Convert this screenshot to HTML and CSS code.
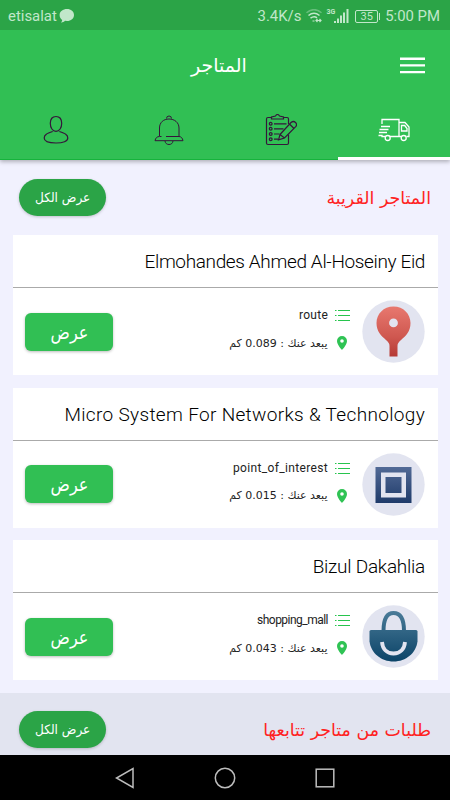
FILE: index.html
```html
<!DOCTYPE html>
<html lang="ar">
<head>
<meta charset="utf-8">
<title>المتاجر</title>
<link rel="stylesheet" href="styles.css">
</head>
<body>
<svg class="defs" width="0" height="0">
  <defs>
    <linearGradient id="red" x1="0" y1="0" x2="0" y2="1"><stop offset="0" stop-color="#e8786f"/><stop offset=".6" stop-color="#cf5850"/><stop offset="1" stop-color="#b53a35"/></linearGradient>
    <linearGradient id="blue" x1="0" y1="0" x2="0" y2="1"><stop offset="0" stop-color="#526a96"/><stop offset="1" stop-color="#1f3b6a"/></linearGradient>
    <linearGradient id="teal" gradientUnits="userSpaceOnUse" x1="0" y1="6" x2="0" y2="56"><stop offset="0" stop-color="#4a7b98"/><stop offset="1" stop-color="#0c4468"/></linearGradient>
    <symbol id="list" viewBox="0 0 15 12"><path d="M0 1.500h1.500M0 6.500h1.500M0 11.500h1.500M3 1.500h12M3 6.500h12M3 11.500h12" fill="none" stroke="#27c44d" stroke-width="1"/></symbol>
    <symbol id="pin" viewBox="0 0 10 14"><path fill="#2fc354" fill-rule="evenodd" d="M5 0a5 5 0 0 1 5 5c0 3.700-5 9-5 9S0 8.700 0 5a5 5 0 0 1 5-5zm0 3.200a1.800 1.800 0 1 0 0 3.600 1.800 1.800 0 0 0 0-3.600z"/></symbol>
  </defs>
</svg>
<div class="screen">
  <div class="status">
    <span class="carrier">etisalat</span>
    <svg class="bubble" width="16" height="14" viewBox="0 0 16 14"><path d="M8 0c4 0 7 2.500 7 6s-3 6-7 6l-2-.2C5 13 3.600 13.500 2 13.400c.8-.7 1.200-1.500 1.200-2.400C1.500 9.800.6 8 .6 6c0-3.500 3.400-6 7.400-6z" fill="#c1e7ca"/></svg>
    <span class="speed">3.4K/s</span>
    <svg class="wifi" width="16" height="14" viewBox="0 0 16 14" fill="none" stroke="#c1e7ca" stroke-width="1.500"><path d="M.5 3.800Q8-2.500 15.500 3.800" opacity=".4"/><path d="M2.500 6.500Q8 2 13.500 6.500M4.500 9.200Q8 6.500 11 8.800"/><path d="M6.500 12h2M10 11.500h5M11.500 10l-1.500 1.500 1.500 1.500M13.500 10l1.500 1.500-1.500 1.500" stroke-width="1.200"/></svg>
    <span class="gen">3G</span>
    <svg class="signal" width="15" height="14" viewBox="0 0 15 14" fill="#c1e7ca"><path d="M0 12h2v2H0zM3 9.500h2V14H3zM6 6.500h2V14H6zM9 3.500h2V14H9zM12.500 0h2v14h-2z"/></svg>
    <span class="battery">35</span><i class="cap"></i>
    <span class="clock">5:00 PM</span>
  </div>
  <header class="appbar">
    <h1 class="title" dir="rtl">المتاجر</h1>
    <svg class="menu" width="25" height="17" viewBox="0 0 25 17"><path d="M0 1.700h25M0 8.400h25M0 15.100h25" stroke="#fff" stroke-width="2.400"/></svg>
  </header>
  <nav class="tabs">
    <div class="tab"><svg width="26" height="30" viewBox="0 0 26 30" fill="none" stroke="#35153b" stroke-width="1.200"><path d="M13 1.500c-3.700 0-5.700 2.600-5.700 6.800 0 4.600 2.300 8 5.700 8s5.700-3.400 5.700-8c0-4.200-2-6.800-5.700-6.800zM9.700 16.500C4 18.500 1.200 19.500 1.200 23c0 3.400 4.800 5 11.800 5s11.800-1.600 11.800-5c0-3.500-2.800-4.500-8.500-6.500"/></svg></div>
    <div class="tab"><svg width="30" height="30" viewBox="0 0 30 30" fill="none" stroke="#35153b" stroke-width="1"><path d="M12.500 3.500a2.500 2.500 0 1 1 5 0M7.500 21.500H5.500M5.500 21V13C5.500 7.500 9.500 4 15 4s10 3.500 10 9v8.500H12M5.500 21.500C3 21.500 1.500 23 1 25.700h28c-.5-2.700-2-4.200-4-4.200M11 26c.3 2.200 1.700 3.500 4 3.500s3.700-1.300 4-3.500"/></svg></div>
    <div class="tab"><svg width="32" height="32" viewBox="0 0 32 32" fill="none" stroke="#35153b" stroke-width="1.200"><path d="M6.500 3.500H3a1.500 1.500 0 0 0-1.500 1.500v24A1.500 1.500 0 0 0 3 30.500h19a1.500 1.500 0 0 0 1.500-1.500V20.500M18.500 3.500H22A1.500 1.500 0 0 1 23.500 5v5M6.500 5V3l4-1Q12.500-1 14.500 2l4 1v2zM9 9.800h12.500M9 14.800h9.500M9 20h5.500M9 25.200h4"/><g><circle cx="5.700" cy="9.800" r="1.400"/><circle cx="5.700" cy="14.800" r="1.400"/><circle cx="5.700" cy="20" r="1.400"/><circle cx="5.700" cy="25.200" r="1.400"/></g><path d="M15 20.500 26 8.500q2.500-2 4.500 0t.2 4.200L19.500 24l-6 1.800zM24.500 10l4.500 4.500M15 20.500l4.500 3.500"/></svg></div>
    <div class="tab active"><svg width="32" height="24" viewBox="0 0 32 24" fill="none" stroke="#fff" stroke-width="1.300"><path d="M4 6V1.500h17v17h-9.300M3 8.500h9M1.500 11.500h9M1 14.500h8M.5 17.500h3.500v1h3.200M21 4.500h6l4 4.500v9.500h-2.500M23 18.500h-2M23.500 13V7.500h3.200l2.300 3V13z"/><circle cx="9.700" cy="20" r="2.500"/><circle cx="25.700" cy="20" r="2.500"/></svg></div>
  </nav>
  <main class="content">
    <section class="nearby">
      <div class="section-head"><a class="pill" dir="rtl"><span>عرض الكل</span></a><h2 class="near-title" dir="rtl">المتاجر القريبة</h2></div>
      <article class="card">
        <h3 class="name n1">Elmohandes Ahmed Al-Hoseiny Eid</h3>
        <div class="body">
          <a class="show" dir="rtl"><span>عرض</span></a>
          <div class="info">
            <div class="row"><span class="kind k1">route</span><svg class="list" width="15" height="12"><use href="#list"/></svg></div>
            <div class="row"><span class="dist" dir="rtl">يبعد عنك : 0.089 كم</span><svg class="pin" width="10" height="14"><use href="#pin"/></svg></div>
          </div>
          <svg class="avatar" width="63" height="63" viewBox="0 0 63 63"><circle cx="31.500" cy="31.500" r="31.200" fill="#e2e4f0"/><path fill="url(#red)" fill-rule="evenodd" d="M31.500 6.500c10 0 17 7.500 17 16.500 0 8.500-4.500 12.500-9.500 17-2.500 2.200-3.500 3.500-3.500 6v10.500h-8V46c0-2.500-1-3.800-3.500-6-5-4.500-9.500-8.500-9.500-17 0-9 7-16.500 17-16.500zm0 12a4.400 4.400 0 1 0 0 8.800 4.400 4.400 0 0 0 0-8.800z"/></svg>
        </div>
      </article>
      <article class="card">
        <h3 class="name n2">Micro System For Networks &amp; Technology</h3>
        <div class="body">
          <a class="show" dir="rtl"><span>عرض</span></a>
          <div class="info">
            <div class="row"><span class="kind k2">point_of_interest</span><svg class="list" width="15" height="12"><use href="#list"/></svg></div>
            <div class="row"><span class="dist" dir="rtl">يبعد عنك : 0.015 كم</span><svg class="pin" width="10" height="14"><use href="#pin"/></svg></div>
          </div>
          <svg class="avatar" width="63" height="63" viewBox="0 0 63 63"><circle cx="31.500" cy="31.500" r="31.200" fill="#e2e4f0"/><path fill="url(#blue)" fill-rule="evenodd" d="M13.500 14h36v36h-36zm5.500 5.500v25h25v-25zM23.500 24h16v16h-16z"/></svg>
        </div>
      </article>
      <article class="card">
        <h3 class="name n3">Bizul Dakahlia</h3>
        <div class="body">
          <a class="show" dir="rtl"><span>عرض</span></a>
          <div class="info">
            <div class="row"><span class="kind k3">shopping_mall</span><svg class="list" width="15" height="12"><use href="#list"/></svg></div>
            <div class="row"><span class="dist" dir="rtl">يبعد عنك : 0.043 كم</span><svg class="pin" width="10" height="14"><use href="#pin"/></svg></div>
          </div>
          <svg class="avatar" width="63" height="63" viewBox="0 0 63 63"><circle cx="31.500" cy="31.500" r="31.200" fill="#e2e4f0"/><path d="M21.500 26C21.500 13 25.500 8 31.500 8s10.500 5 10.500 18" fill="none" stroke="url(#teal)" stroke-width="4"/><path fill="url(#teal)" d="M9 25h45q1.500 0 1.500 1.500v10C54 48 44 56.500 31.500 56.500S9 48 7.500 36.500v-10Q7.500 25 9 25z"/><path d="M20 37c.5 7 5 11.500 11.500 11.500S42.500 44 43 37" fill="none" stroke="#e2e4f0" stroke-width="3.800"/></svg>
        </div>
      </article>
    </section>
    <section class="followed">
      <div class="section-head"><a class="pill" dir="rtl"><span>عرض الكل</span></a><h2 class="follow-title" dir="rtl">طلبات من متاجر تتابعها</h2></div>
    </section>
  </main>
  <footer class="navbar">
    <svg width="20" height="22" viewBox="0 0 20 22"><path d="M18 1.500v19L1.500 11z"/></svg>
    <svg width="22" height="22" viewBox="0 0 22 22"><circle cx="11" cy="11" r="9.700"/></svg>
    <svg width="20" height="20" viewBox="0 0 20 20"><rect x="1.200" y="1.200" width="17.600" height="17.600"/></svg>
  </footer>
</div>
</body>
</html>
```
FILE: styles.css
```css
* { box-sizing: border-box; }
body { margin: 0; font-family: "DejaVu Sans", sans-serif; }
h1, h2, h3 { margin: 0; font-weight: 400; white-space: nowrap; }
svg { display: block; flex: none; }
.defs { position: absolute; }
.screen { width: 450px; height: 800px; overflow: hidden; display: flex; flex-direction: column; background: #f1f1fe; }

.status { flex: none; height: 30px; background: #2ba447; color: #c1e7ca; display: flex; align-items: center; padding: 2px 10px 0 8px; font: 14.900px Roboto, sans-serif; white-space: nowrap; }
.bubble { margin-left: 2px; }
.speed { margin-left: auto; }
.wifi { margin-left: 5px; }
.gen { font-size: 7px; font-weight: 700; margin: -9px 0 0 4px; }
.signal { margin-left: -1px; }
.battery { margin-left: 6px; width: 23px; height: 13px; border: 1px solid #c1e7ca; border-radius: 2px; font-size: 11px; line-height: 12px; text-align: center; }
.cap { width: 1px; height: 7px; margin-left: 1px; background: #c1e7ca; }
.clock { margin-left: 5px; }

.appbar { flex: none; height: 70px; background: #31bf54; color: #fff; display: flex; align-items: center; padding: 0 25px 0 191px; position: relative; z-index: 2; }
.title { font-size: 19px; line-height: 30px; }
.menu { margin-left: auto; }
.tabs { flex: none; height: 60px; display: grid; grid-template-columns: repeat(4, 1fr); background: #31bf54; box-shadow: 0 2px 4px #0004; border-bottom: 1px solid #16b33c; z-index: 1; }
.tab { display: flex; align-items: center; justify-content: center; height: 60px; }
.tab.active { border-bottom: 3px solid #fff; padding-top: 3px; }

.content { flex: 1; overflow: hidden; }
.nearby { height: 533px; padding: 0 12.500px; display: flex; flex-direction: column; gap: 12.500px; }
.section-head { flex: none; height: 62.500px; padding: 19px 6.500px 0; display: flex; justify-content: space-between; }
.section-head h2 { color: #f22; font-size: 17.400px; line-height: 38px; }
.pill { width: 87px; height: 37px; border-radius: 19px; background: #2ba447; color: #fff; font-size: 13px; line-height: 37px; text-align: center; white-space: nowrap; box-shadow: 0 1px 3px #0003; }
.pill span, .show span { display: inline-block; }
.pill span { transform: scaleX(.93); }
.show span { transform: scaleX(.84); }
.card { flex: none; height: 140px; background: #fff; }
.name { height: 53px; border-bottom: 1.500px solid #aaa; padding-right: 12.500px; text-align: right; font-family: Roboto, sans-serif; font-weight: 300; font-size: 19px; line-height: 53px; color: #000; }
.n1 { letter-spacing: -.36px; }
.n2 { letter-spacing: .33px; }
.n3 { letter-spacing: -.25px; }
.body { height: 87px; padding: 0 12.500px; display: flex; align-items: center; }
.show { width: 88px; height: 38px; border-radius: 6px; background: #31bf54; color: #fff; font-size: 19px; line-height: 38px; text-align: center; box-shadow: 0 1px 3px #0004; }
.info { margin: -5px 0 0 auto; display: grid; gap: 8px; }
.row { height: 20px; display: flex; align-items: center; justify-content: flex-end; white-space: nowrap; color: #222; }
.kind { font: 12px Roboto, sans-serif; margin-right: 7px; }
.k1 { letter-spacing: .25px; }
.k2 { letter-spacing: .35px; }
.k3 { letter-spacing: -.52px; }
.dist { font-size: 11px; margin-right: 9.500px; }
.pin { margin-right: 3px; }
.avatar { margin-left: 12px; }
.followed { height: 100px; padding: 0 12.500px; background: #e2e4f0; }
.followed .section-head { padding-top: 18px; }

.navbar { flex: none; height: 45px; background: #000; display: flex; align-items: center; justify-content: center; gap: 79px; }
.navbar svg { fill: none; stroke: #bdbdbd; stroke-width: 1.500; }
```
